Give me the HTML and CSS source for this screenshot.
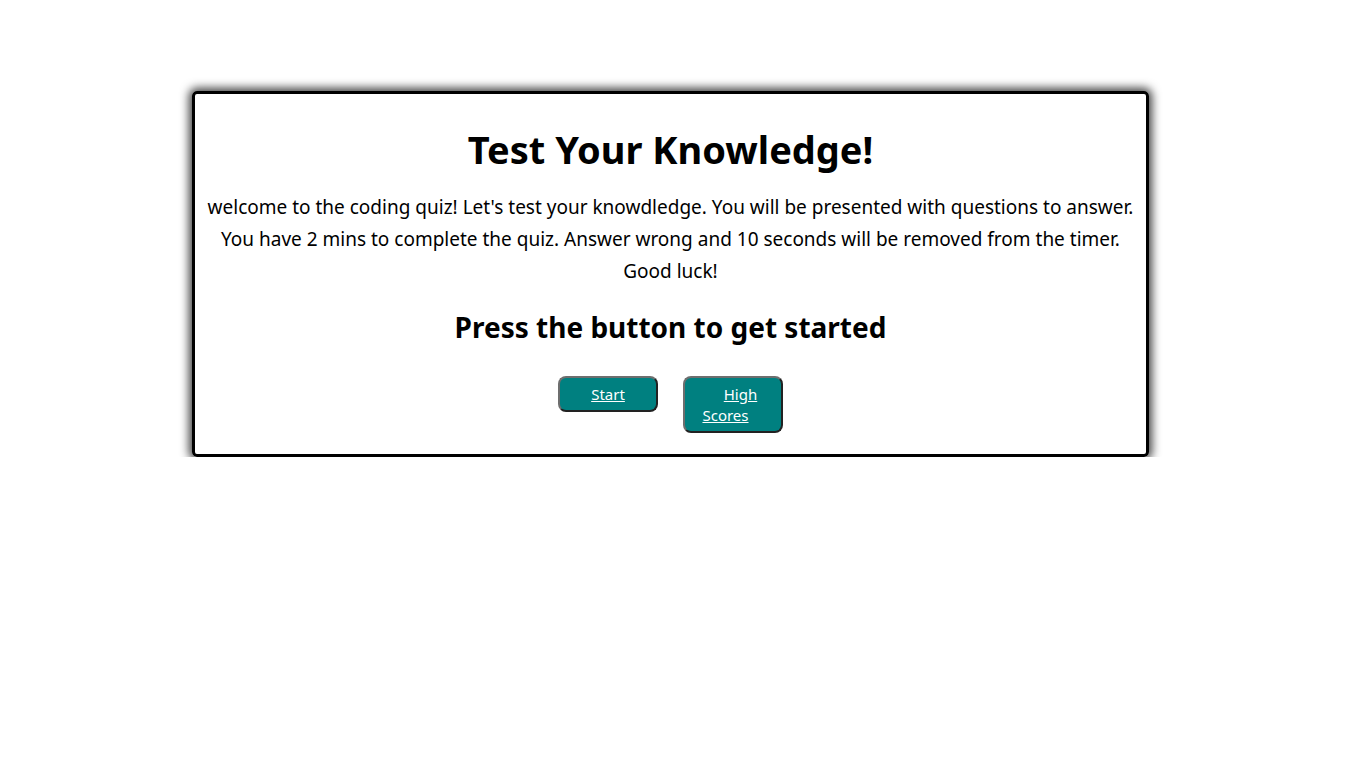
FILE: index.html
```html
<!DOCTYPE html>
<html lang="en">
<head>
<meta charset="utf-8">
<title>Coding Quiz</title>
<link rel="stylesheet" href="styles.css">
</head>
<body>
<main class="card">
  <h1 class="title">Test Your Knowledge!</h1>
  <p class="intro">welcome to the coding quiz! Let's test your knowdledge. You will be presented with questions to answer.<br>You have 2 mins to complete the quiz. Answer wrong and 10 seconds will be removed from the timer.<br>Good luck!</p>
  <h2 class="subtitle">Press the button to get started</h2>
  <div class="actions">
    <button class="btn" type="button"><a href="#" class="btn-link">Start</a></button>
    <button class="btn" type="button"><a href="#" class="btn-link">High Scores</a></button>
  </div>
</main>
</body>
</html>
```
FILE: styles.css
```css
html, body {
  margin: 0;
  padding: 0;
  background: #fff;
}
body {
  font-family: "Noto Sans", "Open Sans", sans-serif;
  color: #000;
  padding-top: 91px;
}
.card {
  box-sizing: border-box;
  width: 957px;
  margin-left: 192px;
  border: 3px solid #000;
  border-radius: 5px;
  box-shadow: 0 0 10px 3px rgba(0, 0, 0, 0.75);
  text-align: center;
  padding: 29px 10px 21px;
}
.title {
  font-size: 38px;
  font-weight: 700;
  line-height: 52px;
  margin: 0;
}
.intro {
  font-size: 19px;
  line-height: 32px;
  margin: 16px 0 0;
}
.subtitle {
  font-size: 28px;
  font-weight: 700;
  line-height: 38px;
  margin: 21px 0 0;
}
.actions {
  display: flex;
  justify-content: center;
  align-items: flex-start;
  gap: 25px;
  margin-top: 30px;
}
.btn {
  box-sizing: border-box;
  width: 100px;
  background: #008080;
  border: 2px solid;
  border-color: #6e6e6e #222 #222 #6e6e6e;
  border-radius: 8px;
  padding: 6px 6px 5px;
  font-family: inherit;
  font-size: 15px;
  line-height: 21px;
  color: #fff;
  cursor: pointer;
}
.btn-link {
  color: #fff;
  text-decoration: underline;
  padding: 0 15px;
}
```
